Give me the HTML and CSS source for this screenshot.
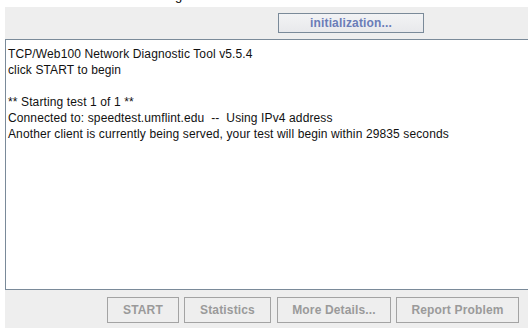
FILE: index.html
```html
<!DOCTYPE html>
<html lang="en">
<head>
    <meta charset="UTF-8">
    <title>TCP/Web100 Network Diagnostic Tool</title>
    <link rel="stylesheet" href="styles.css">
</head>
<body>

    <!-- clipped caption above the applet -->
    <div class="caption"><div class="caption-text">g</div></div>

    <div class="applet">
        <div class="top-bar">
            <button class="btn btn-status">initialization...</button>
        </div>

        <div class="console">TCP/Web100 Network Diagnostic Tool v5.5.4
click START to begin

** Starting test 1 of 1 **
Connected to: speedtest.umflint.edu  --  Using IPv4 address
Another client is currently being served, your test will begin within 29835 seconds</div>

        <div class="button-bar">
            <button class="btn btn-disabled w-start">START</button>
            <button class="btn btn-disabled w-stats">Statistics</button>
            <button class="btn btn-disabled w-details">More Details...</button>
            <button class="btn btn-disabled w-report">Report Problem</button>
        </div>
    </div>

</body>
</html>
```

FILE: styles.css
```css
/* --- Page --- */
body {
    margin: 0;
    padding: 0;
    background-color: #ffffff;
    font-family: 'Liberation Sans', Arial, sans-serif;
    font-size: 12px;
    color: #111111;
}

.caption {
    height: 7px;
    overflow: hidden;
}
.caption-text {
    margin-top: -11px;
    padding-left: 175px;
    font-size: 13px;
    line-height: 14px;
    color: #000000;
}

/* --- Applet frame --- */
.applet {
    margin-left: 5px;
    width: 523px;
    background-color: #eeeeee;
}

.top-bar {
    height: 32px;
    box-sizing: border-box;
    padding-top: 6px;
    padding-left: 273px;
}

.console {
    height: 251px;
    box-sizing: border-box;
    background-color: #ffffff;
    border-top: 1px solid #7a8a99;
    border-left: 1px solid #7a8a99;
    border-bottom: 1px solid #7a8a99;
    padding: 6px 2px 0;
    white-space: pre;
    line-height: 16px;
    letter-spacing: 0.12px;
    color: #111111;
    overflow: hidden;
}

.button-bar {
    width: 518px;
    height: 38px;
    box-sizing: border-box;
    display: flex;
    justify-content: flex-end;
    align-items: flex-start;
    gap: 5px;
    padding-top: 7px;
    padding-right: 4px;
    background-color: #eeeeee;
}

/* --- Buttons --- */
.btn {
    font-family: 'Liberation Sans', Arial, sans-serif;
    font-size: 12px;
    font-weight: 700;
    letter-spacing: 0.15px;
    background-color: #eeeeee;
    padding: 0;
    margin: 0;
    box-sizing: border-box;
}

.btn-status {
    width: 146px;
    height: 20px;
    border: 1px solid #7a8a99;
    color: #6a7db8;
    background: linear-gradient(#f2f3f5, #e8e9ec);
}

.btn-disabled {
    height: 26px;
    border: 1px solid #a3a3a3;
    color: #9a9a9a;
}

.w-start { width: 72px; }
.w-stats { width: 87px; margin-right: 1px; }
.w-details { width: 114px; }
.w-report { width: 123px; }
```
